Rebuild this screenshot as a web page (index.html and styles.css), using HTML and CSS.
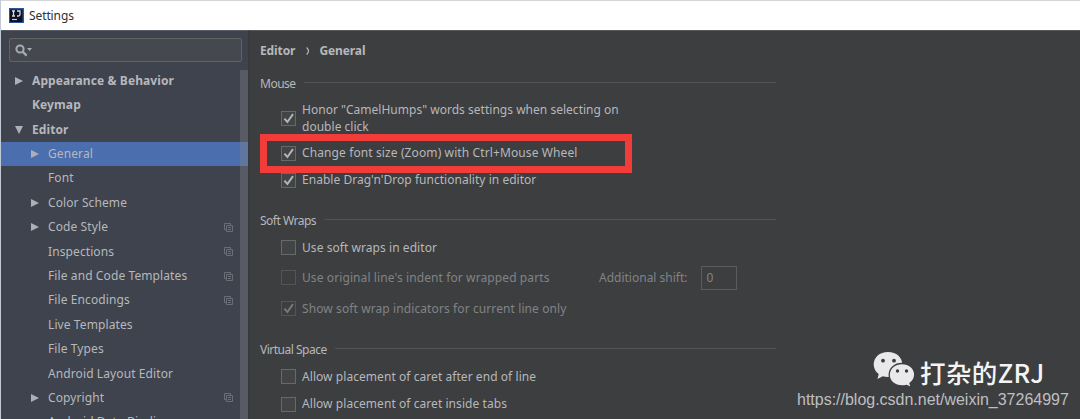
FILE: index.html
```html
<!DOCTYPE html>
<html lang="en">
<head>
<meta charset="utf-8">
<title>Settings</title>
<link rel="stylesheet" href="styles.css">
</head>
<body>
<svg class="defs" width="0" height="0">
  <symbol id="copy" viewBox="0 0 9 9"><path d="M2 6.5H.5v-6h6V2M2.5 2.5h6v6h-6zM4 4.5h3M4 6.5h3" fill="none" stroke="currentColor" stroke-width=".9"/></symbol>
  <symbol id="right" viewBox="0 0 8 8"><path d="M0 0l8 4-8 4z" fill="currentColor"/></symbol>
  <symbol id="down" viewBox="0 0 8 8"><path d="M0 0h8L4 8z" fill="currentColor"/></symbol>
  <symbol id="check" viewBox="0 0 13 13"><path d="M2.400 6.700l3 3.300L11 2.200" fill="none" stroke="currentColor" stroke-width="2"/></symbol>
</svg>
<div class="window">
  <header class="titlebar">
    <svg class="logo" viewBox="0 0 15 15"><path d="M0 0h15v15H0z" fill="#245a9c"/><path d="M1 1.5h12.5V14H1z" fill="#0d1023"/><path d="M3 3h3M4.5 3v5M3 8h3M8 3h3v3.5q0 1.5-1.5 1.5H8" fill="none" stroke="#ded9e3" stroke-width="1.3"/><path d="M3 11.5h5" stroke="#c8cad5" stroke-width="1.2"/></svg>
    <span class="title">Settings</span>
  </header>
  <div class="body">
    <aside class="sidebar">
      <div class="search">
        <svg class="search-icon" viewBox="0 0 18 13"><circle cx="5" cy="5" r="3.6" fill="none" stroke="currentColor" stroke-width="2"/><path d="M7.6 7.6l4 4" stroke="currentColor" stroke-width="2.3"/><path d="M12 4h5l-2.5 3z" fill="currentColor"/></svg>
      </div>
      <div class="tree-wrap">
        <ul class="tree">
          <li class="row top"><svg class="arrow"><use href="#right"/></svg><span>Appearance &amp; Behavior</span></li>
          <li class="row top"><i class="arrow"></i><span>Keymap</span></li>
          <li class="row top"><svg class="arrow"><use href="#down"/></svg><span>Editor</span></li>
          <li class="row selected"><svg class="arrow"><use href="#right"/></svg><span>General</span></li>
          <li class="row"><i class="arrow"></i><span>Font</span></li>
          <li class="row"><svg class="arrow"><use href="#right"/></svg><span>Color Scheme</span></li>
          <li class="row"><svg class="arrow"><use href="#right"/></svg><span>Code Style</span><svg class="copy"><use href="#copy"/></svg></li>
          <li class="row"><i class="arrow"></i><span>Inspections</span><svg class="copy"><use href="#copy"/></svg></li>
          <li class="row"><i class="arrow"></i><span>File and Code Templates</span><svg class="copy"><use href="#copy"/></svg></li>
          <li class="row"><i class="arrow"></i><span>File Encodings</span><svg class="copy"><use href="#copy"/></svg></li>
          <li class="row"><i class="arrow"></i><span>Live Templates</span></li>
          <li class="row"><i class="arrow"></i><span>File Types</span></li>
          <li class="row"><i class="arrow"></i><span>Android Layout Editor</span></li>
          <li class="row"><svg class="arrow"><use href="#right"/></svg><span>Copyright</span><svg class="copy"><use href="#copy"/></svg></li>
          <li class="row"><i class="arrow"></i><span>Android Data Binding</span></li>
        </ul>
        <div class="scrollbar"></div>
      </div>
    </aside>
    <main class="main">
      <nav class="crumbs"><span>Editor</span><svg class="chevron" viewBox="0 0 4 8"><path d="M.6.5Q4.4 4 .6 7.5" fill="none" stroke="currentColor" stroke-width="1.2"/></svg><span>General</span></nav>
      <section class="group mouse">
        <h2 class="heading"><span>Mouse</span></h2>
        <label class="option honor"><span class="box"><svg><use href="#check"/></svg></span><span>Honor "CamelHumps" words settings when selecting on<br>double click</span></label>
        <label class="option highlight"><span class="box"><svg><use href="#check"/></svg></span><span>Change font size (Zoom) with Ctrl+Mouse Wheel</span></label>
        <label class="option drag"><span class="box"><svg><use href="#check"/></svg></span><span>Enable Drag'n'Drop functionality in editor</span></label>
      </section>
      <section class="group wraps">
        <h2 class="heading"><span>Soft Wraps</span></h2>
        <label class="option"><span class="box"></span><span>Use soft wraps in editor</span></label>
        <div class="option tall disabled"><span class="box"></span><span class="indent">Use original line's indent for wrapped parts</span><span class="shift">Additional shift:</span><span class="field">0</span></div>
        <label class="option tall disabled"><span class="box"><svg><use href="#check"/></svg></span><span>Show soft wrap indicators for current line only</span></label>
      </section>
      <section class="group">
        <h2 class="heading"><span>Virtual Space</span></h2>
        <label class="option"><span class="box"></span><span>Allow placement of caret after end of line</span></label>
        <label class="option"><span class="box"></span><span>Allow placement of caret inside tabs</span></label>
      </section>
    </main>
  </div>
  <div class="watermark">
    <div class="account">
      <svg class="wechat" viewBox="0 0 42 37"><path d="M15 1C6.5 1 .7 6.5.7 13.4c0 4 2 7.300 5 9.600L4.500 28l5.200-2.800c1.700.5 3.400.7 5.300.7 8.500 0 14.300-5.600 14.300-12.500S23.500 1 15 1z" fill="#e9e9ec"/><path d="M29 12.500c-7.400 0-12.800 4.800-12.800 11.300S21.600 35 29 35c1.700 0 3.200-.2 4.600-.6l4.600 2.300-1.200-4.400c2.900-2.100 4.700-5 4.700-8.500 0-6.500-5.300-11.300-12.700-11.300z" fill="#e9e9ec" stroke="#3d3d41" stroke-width="1.300"/><g fill="#3d3d41"><circle cx="10" cy="9.700" r="1.900"/><circle cx="21" cy="9.700" r="1.900"/><circle cx="24.500" cy="20" r="1.700"/><circle cx="33.500" cy="20" r="1.700"/></g></svg>
      <span class="name">打杂的ZRJ</span>
    </div>
    <div class="url">https://blog.csdn.net/weixin_37264997</div>
  </div>
</div>
</body>
</html>
```
FILE: styles.css
```css
* { box-sizing: border-box; }
body { margin: 0; overflow: hidden; font: 12px/16px "Noto Sans", "Open Sans", sans-serif; color: #b6b8bb; background: #3d3d40; }
.defs { position: absolute; }
.window { position: relative; display: flex; flex-direction: column; width: 1080px; height: 419px; overflow: hidden; border-left: 1px solid #c2cbd5; }
.titlebar { display: flex; align-items: center; gap: 5px; flex: none; height: 30px; padding-left: 8px; background: #fff; border-top: 1px solid #d5d5d5; color: #303030; }
.logo { width: 15px; height: 15px; }
.title { font-size: 12px; letter-spacing: -.1px; }
.body { display: flex; flex: 1; min-height: 0; }
.sidebar { display: flex; flex-direction: column; flex: none; width: 249px; background: #3f434d; border-right: 2px solid #393a3e; border-top: 1px solid #565a62; }
.search { display: flex; align-items: center; flex: none; height: 24px; margin: 7px 6px 6px 8px; padding-left: 5px; background: #45494f; border: 1px solid #5f6366; border-radius: 2px; }
.search-icon { width: 18px; height: 13px; color: #a6acb2; }
.tree-wrap { position: relative; flex: 1; min-height: 0; overflow: hidden; }
.tree { margin: 0; padding: .7px 0 0; list-style: none; }
.row { display: flex; align-items: center; gap: 9px; height: 24.4px; padding: 0 15px 0 30px; white-space: nowrap; letter-spacing: .1px; }
.row.top { padding-left: 14px; font-weight: 700; }
.selected { background: #4b6eaf; }
.arrow { flex: none; width: 8px; height: 8px; color: #adb0b4; }
.copy { width: 9px; height: 9px; margin-left: auto; color: #6d737b; }
.scrollbar { position: absolute; top: 2px; right: 0; bottom: 0; width: 8px; background: rgba(130, 132, 140, .38); }
.main { flex: 1; padding-left: 10px; background: #3d3e40; border-top: 1px solid #58595b; }
.crumbs { display: flex; align-items: center; height: 39px; font-weight: 700; letter-spacing: -.1px; }
.chevron { width: 4px; height: 8px; margin: 0 9px 0 11px; }
.heading { display: flex; align-items: center; gap: 8px; width: 516px; height: 27px; margin: 0; font-size: 12px; font-weight: 400; letter-spacing: -.5px; }
.heading::after { content: ""; flex: 1; height: 1px; margin-top: -2px; background: #515355; }
.option { display: flex; align-items: center; gap: 6px; height: 27.500px; padding-left: 21px; white-space: nowrap; letter-spacing: .06px; }
.option.tall { height: 31px; }
.box { display: flex; align-items: center; justify-content: center; flex: none; width: 15px; height: 15px; background: #424446; border: 1px solid #66696b; color: #b4b5b6; }
.box svg { width: 13px; height: 13px; }
.honor { height: 37px; padding-top: 6px; line-height: 16.500px; letter-spacing: .02px; }
.highlight { width: 372px; height: 39px; padding: 0 0 1px 14px; border: 7px solid #f23c39; letter-spacing: .11px; }
.drag { height: 14px; letter-spacing: .03px; }
.mouse { height: 137px; }
.wraps { height: 129px; }
.wraps .tall { padding-top: 1px; letter-spacing: .1px; }
.disabled { color: #818386; }
.disabled .box { background: transparent; border-color: #535557; color: #77797a; }
.indent { width: 291px; }
.shift { letter-spacing: 0; }
.field { width: 36px; height: 24px; margin-left: 7px; padding: 3px 5px; border: 1px solid #5a5b5e; }
.watermark { position: absolute; left: 796px; top: 351px; }
.account { display: flex; align-items: flex-start; gap: 5px; padding-left: 76px; height: 40px; }
.wechat { width: 42px; height: 37px; }
.name { margin-top: 6px; color: #f4f4f4; font: 500 25.500px/30px "Noto Sans CJK SC", sans-serif; letter-spacing: .4px; white-space: nowrap; }
.url { color: #bfbfc1; font: 16px/18px "Liberation Sans", sans-serif; letter-spacing: -.01px; white-space: nowrap; }
```
